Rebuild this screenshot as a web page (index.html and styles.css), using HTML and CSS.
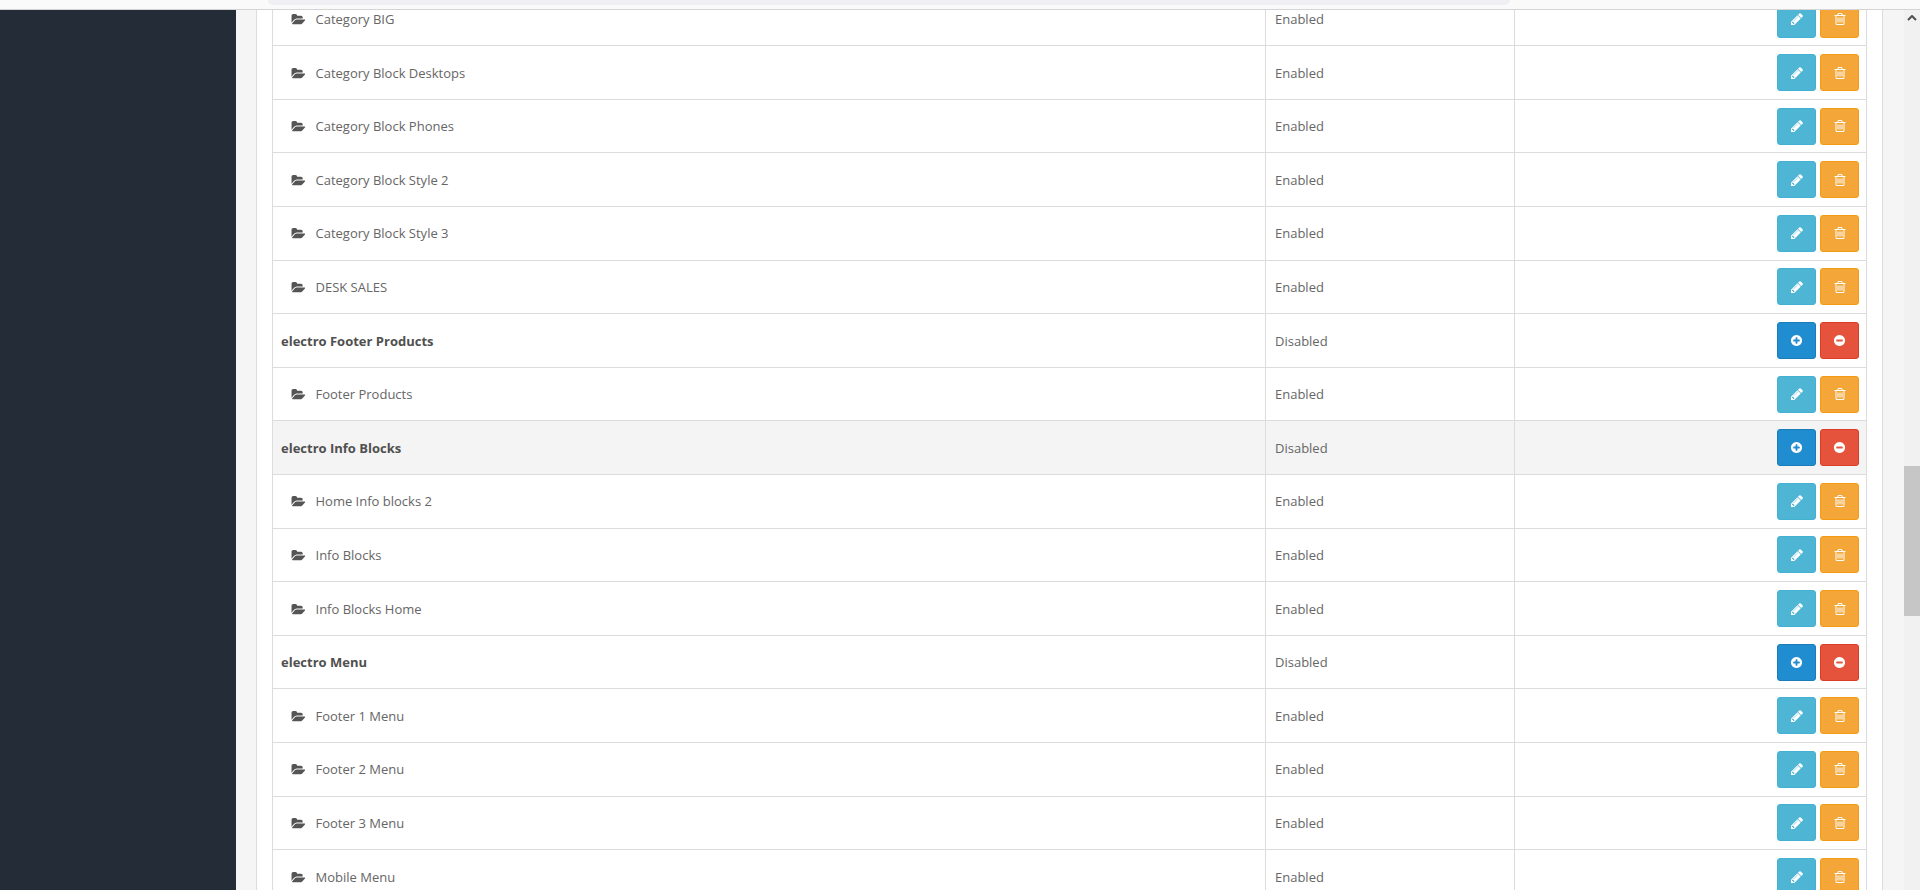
FILE: index.html
```html
<!DOCTYPE html>
<html lang="en">
<head>
<meta charset="utf-8">
<title>Layouts</title>
<link rel="stylesheet" href="styles.css">
</head>
<body>
<svg class="defs" aria-hidden="true">
  <symbol id="i-folder" viewBox="0 0 2048 1792"><path d="M1943 952q0 31-31 66l-336 396q-43 51-120.5 86.5t-143.5 35.5h-1088q-34 0-60.5-13t-26.5-43q0-31 31-66l336-396q43-51 120.5-86.5t143.5-35.5h1088q34 0 60.5 13t26.5 43zm-343-344v160h-832q-94 0-197 47.5t-164 119.5l-337 396-5 6q0-4-.5-12.5t-.5-12.5v-960q0-92 66-158t158-66h320q92 0 158 66t66 158v32h544q92 0 158 66t66 158z"/></symbol>
  <symbol id="i-pencil" viewBox="0 0 1792 1792"><path d="M491 1536l91-91-235-235-91 91v107h128v128h107zm523-928q0-22-22-22-10 0-17 7l-542 542q-7 7-7 17 0 22 22 22 10 0 17-7l542-542q7-7 7-17zm-54-192l416 416-832 832h-416v-416zm683 96q0 53-37 90l-166 166-416-416 166-165q36-38 90-38 53 0 91 38l235 234q37 39 37 91z"/></symbol>
  <symbol id="i-trash" viewBox="0 0 1792 1792"><path d="M704 736v576q0 14-9 23t-23 9h-64q-14 0-23-9t-9-23v-576q0-14 9-23t23-9h64q14 0 23 9t9 23zm256 0v576q0 14-9 23t-23 9h-64q-14 0-23-9t-9-23v-576q0-14 9-23t23-9h64q14 0 23 9t9 23zm256 0v576q0 14-9 23t-23 9h-64q-14 0-23-9t-9-23v-576q0-14 9-23t23-9h64q14 0 23 9t9 23zm128 724v-948h-896v948q0 22 7 40.5t14.5 27 10.5 8.5h832q3 0 10.5-8.5t14.5-27 7-40.5zm-672-1076h448l-48-117q-7-9-17-11h-317q-10 2-17 11zm928 32v64q0 14-9 23t-23 9h-96v948q0 83-47 143.5t-113 60.5h-832q-66 0-113-58.5t-47-141.5v-952h-96q-14 0-23-9t-9-23v-64q0-14 9-23t23-9h309l70-167q15-37 54-63t79-26h320q40 0 79 26t54 63l70 167h309q14 0 23 9t9 23z"/></symbol>
  <symbol id="i-plus" viewBox="0 0 1792 1792"><path d="M1344 960v-128q0-26-19-45t-45-19h-256v-256q0-26-19-45t-45-19h-128q-26 0-45 19t-19 45v256h-256q-26 0-45 19t-19 45v128q0 26 19 45t45 19h256v256q0 26 19 45t45 19h128q26 0 45-19t19-45v-256h256q26 0 45-19t19-45zm320-64q0 209-103 385.5t-279.5 279.5-385.5 103-385.5-103-279.5-279.5-103-385.5 103-385.5 279.5-279.5 385.5-103 385.5 103 279.5 279.5 103 385.5z"/></symbol>
  <symbol id="i-minus" viewBox="0 0 1792 1792"><path d="M1344 960v-128q0-26-19-45t-45-19h-768q-26 0-45 19t-19 45v128q0 26 19 45t45 19h768q26 0 45-19t19-45zm320-64q0 209-103 385.5t-279.5 279.5-385.5 103-385.5-103-279.5-279.5-103-385.5 103-385.5 279.5-279.5 385.5-103 385.5 103 279.5 279.5 103 385.5z"/></symbol>
</svg>

<header class="topbar"><div class="topbar-field"></div></header>

<div class="shell">
  <aside class="sidebar"></aside>
  <main class="content">
    <div class="panel">
      <table class="list">
        <colgroup><col class="c-name"><col class="c-status"><col class="c-action"></colgroup>
        <tbody>
          <tr><td class="child"><svg class="folder"><use href="#i-folder"/></svg>Category BIG</td><td>Enabled</td><td class="actions"><a class="btn info"><svg class="ico"><use href="#i-pencil"/></svg></a><a class="btn warn"><svg class="ico"><use href="#i-trash"/></svg></a></td></tr>
          <tr><td class="child"><svg class="folder"><use href="#i-folder"/></svg>Category Block Desktops</td><td>Enabled</td><td class="actions"><a class="btn info"><svg class="ico"><use href="#i-pencil"/></svg></a><a class="btn warn"><svg class="ico"><use href="#i-trash"/></svg></a></td></tr>
          <tr><td class="child"><svg class="folder"><use href="#i-folder"/></svg>Category Block Phones</td><td>Enabled</td><td class="actions"><a class="btn info"><svg class="ico"><use href="#i-pencil"/></svg></a><a class="btn warn"><svg class="ico"><use href="#i-trash"/></svg></a></td></tr>
          <tr><td class="child"><svg class="folder"><use href="#i-folder"/></svg>Category Block Style 2</td><td>Enabled</td><td class="actions"><a class="btn info"><svg class="ico"><use href="#i-pencil"/></svg></a><a class="btn warn"><svg class="ico"><use href="#i-trash"/></svg></a></td></tr>
          <tr><td class="child"><svg class="folder"><use href="#i-folder"/></svg>Category Block Style 3</td><td>Enabled</td><td class="actions"><a class="btn info"><svg class="ico"><use href="#i-pencil"/></svg></a><a class="btn warn"><svg class="ico"><use href="#i-trash"/></svg></a></td></tr>
          <tr><td class="child"><svg class="folder"><use href="#i-folder"/></svg>DESK SALES</td><td>Enabled</td><td class="actions"><a class="btn info"><svg class="ico"><use href="#i-pencil"/></svg></a><a class="btn warn"><svg class="ico"><use href="#i-trash"/></svg></a></td></tr>
          <tr><td class="parent">electro Footer Products</td><td>Disabled</td><td class="actions"><a class="btn primary"><svg class="ico"><use href="#i-plus"/></svg></a><a class="btn danger"><svg class="ico"><use href="#i-minus"/></svg></a></td></tr>
          <tr><td class="child"><svg class="folder"><use href="#i-folder"/></svg>Footer Products</td><td>Enabled</td><td class="actions"><a class="btn info"><svg class="ico"><use href="#i-pencil"/></svg></a><a class="btn warn"><svg class="ico"><use href="#i-trash"/></svg></a></td></tr>
          <tr class="hover"><td class="parent">electro Info Blocks</td><td>Disabled</td><td class="actions"><a class="btn primary"><svg class="ico"><use href="#i-plus"/></svg></a><a class="btn danger"><svg class="ico"><use href="#i-minus"/></svg></a></td></tr>
          <tr><td class="child"><svg class="folder"><use href="#i-folder"/></svg>Home Info blocks 2</td><td>Enabled</td><td class="actions"><a class="btn info"><svg class="ico"><use href="#i-pencil"/></svg></a><a class="btn warn"><svg class="ico"><use href="#i-trash"/></svg></a></td></tr>
          <tr><td class="child"><svg class="folder"><use href="#i-folder"/></svg>Info Blocks</td><td>Enabled</td><td class="actions"><a class="btn info"><svg class="ico"><use href="#i-pencil"/></svg></a><a class="btn warn"><svg class="ico"><use href="#i-trash"/></svg></a></td></tr>
          <tr><td class="child"><svg class="folder"><use href="#i-folder"/></svg>Info Blocks Home</td><td>Enabled</td><td class="actions"><a class="btn info"><svg class="ico"><use href="#i-pencil"/></svg></a><a class="btn warn"><svg class="ico"><use href="#i-trash"/></svg></a></td></tr>
          <tr><td class="parent">electro Menu</td><td>Disabled</td><td class="actions"><a class="btn primary"><svg class="ico"><use href="#i-plus"/></svg></a><a class="btn danger"><svg class="ico"><use href="#i-minus"/></svg></a></td></tr>
          <tr><td class="child"><svg class="folder"><use href="#i-folder"/></svg>Footer 1 Menu</td><td>Enabled</td><td class="actions"><a class="btn info"><svg class="ico"><use href="#i-pencil"/></svg></a><a class="btn warn"><svg class="ico"><use href="#i-trash"/></svg></a></td></tr>
          <tr><td class="child"><svg class="folder"><use href="#i-folder"/></svg>Footer 2 Menu</td><td>Enabled</td><td class="actions"><a class="btn info"><svg class="ico"><use href="#i-pencil"/></svg></a><a class="btn warn"><svg class="ico"><use href="#i-trash"/></svg></a></td></tr>
          <tr><td class="child"><svg class="folder"><use href="#i-folder"/></svg>Footer 3 Menu</td><td>Enabled</td><td class="actions"><a class="btn info"><svg class="ico"><use href="#i-pencil"/></svg></a><a class="btn warn"><svg class="ico"><use href="#i-trash"/></svg></a></td></tr>
          <tr><td class="child"><svg class="folder"><use href="#i-folder"/></svg>Mobile Menu</td><td>Enabled</td><td class="actions"><a class="btn info"><svg class="ico"><use href="#i-pencil"/></svg></a><a class="btn warn"><svg class="ico"><use href="#i-trash"/></svg></a></td></tr>
        </tbody>
      </table>
    </div>
  </main>
  <div class="scrollbar">
    <svg class="chev" viewBox="0 0 10 6"><path d="M1 5l4-4 4 4" fill="none" stroke="#505050" stroke-width="2"/></svg>
    <div class="thumb"></div>
  </div>
</div>
</body>
</html>
```
FILE: styles.css
```css
* { box-sizing: border-box; }
html, body { margin: 0; height: 890px; overflow: hidden; }
body {
  display: flex;
  flex-direction: column;
  font-family: "Open Sans", "Liberation Sans", sans-serif;
  font-size: 13px;
  color: #666;
  background: #f5f5f5;
}
.defs { display: none; }

.topbar {
  height: 10px;
  flex: none;
  background: #fafafa;
  border-bottom: 1px solid #d4d4d4;
}
.topbar-field {
  margin-left: 268px;
  width: 1242px;
  height: 5px;
  background: #f0f0f4;
  border-radius: 0 0 6px 6px;
}

.shell { flex: 1; display: flex; min-height: 0; }
.sidebar { width: 236px; flex: none; background: #232c37; }
.content {
  flex: 1;
  min-width: 0;
  padding: 0 21px 0 20px;
  background: #f5f5f5;
}
.panel {
  height: 100%;
  overflow: hidden;
  background: #fff;
  border-left: 1px solid #dcdcdc;
  border-right: 1px solid #dcdcdc;
  padding: 0 15px;
}
.scrollbar {
  width: 16px;
  flex: none;
  background: #f1f1f1;
  display: flex;
  flex-direction: column;
  align-items: center;
}
.chev { width: 10px; height: 6px; margin-top: 5px; flex: none; }
.thumb {
  align-self: stretch;
  height: 150px;
  margin-top: 445px;
  background: #c6c6c6;
}

.list {
  width: 1595px;
  table-layout: fixed;
  border-collapse: collapse;
  margin-top: -18.3px;
  border-left: 1px solid #dcdcdc;
  border-right: 1px solid #dcdcdc;
}
.c-name { width: 993px; }
.c-status { width: 249px; }
.list td {
  height: 53.6px;
  padding: 9px 8px 8px 9px;
  border: 1px solid #dcdcdc;
  vertical-align: middle;
  line-height: 17px;
}
.list .hover td { background: #f4f4f4; }
.list .parent { font-weight: 700; color: #505050; padding-left: 8px; }
.list .child { padding-left: 18px; }
.folder { width: 15px; height: 13px; margin-right: 9.5px; vertical-align: -2px; fill: #555; }

.list .actions { padding: 0 7px 0 0; text-align: right; font-size: 0; }
.btn {
  display: inline-flex;
  align-items: center;
  justify-content: center;
  width: 39px;
  height: 37px;
  margin-left: 4px;
  border-radius: 3px;
  border: 1px solid;
  vertical-align: middle;
}
.ico { width: 14px; height: 14px; fill: #fff; }
.primary .ico, .danger .ico { width: 13px; height: 13px; }
.info { background: #4fb5d4; border-color: #43b1d1; }
.warn { background: #f4a738; border-color: #f39c12; }
.primary { background: #1f8dcf; border-color: #1a7cb8; }
.danger { background: #e5533d; border-color: #dc3b26; }
```
